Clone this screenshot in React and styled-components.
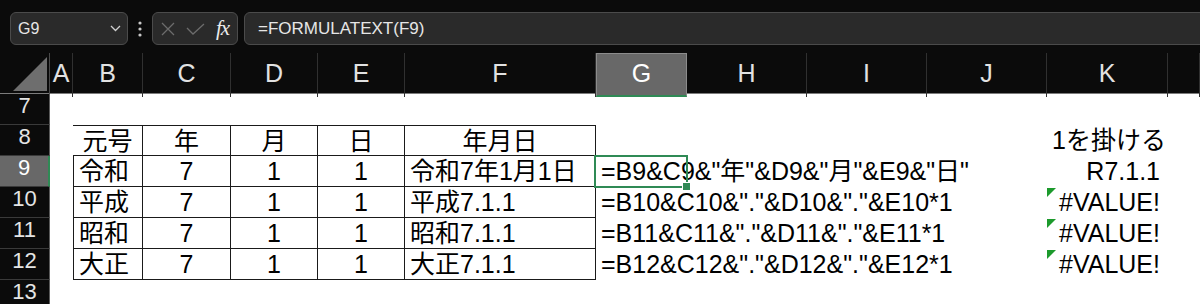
import styled, { createGlobalStyle } from "styled-components";

const GlobalStyle = createGlobalStyle`
  html, body {
    margin: 0;
    padding: 0;
    background: #0b0b0b;
  }

  * {
    box-sizing: border-box;
  }
`;

const COLUMNS = "50px 23px 70px 88px 87px 87px 191px 91px 120px 120px 120px 121px 1fr";
// L is only a sliver at the right edge, its label sits off screen
const LETTERS = ["A", "B", "C", "D", "E", "F", "G", "H", "I", "J", "K", ""];
const GREEN = "#2f8a55";

const Window = styled.div`
  width: 1200px;
  height: 304px;
  overflow: hidden;
  background: #0b0b0b;
  font-family: "Liberation Sans", "Noto Sans CJK JP", sans-serif;
`;

const TopBar = styled.div`
  display: flex;
  align-items: flex-start;
  height: 53px;
  padding: 12px 0 0 10px;
`;

const Field = styled.div`
  display: flex;
  align-items: center;
  height: 33px;
  background: #2a2a2a;
  border: 1px solid #4b4b4b;
  border-radius: 6px;
  color: #e6e6e6;
`;

const NameBox = styled(Field)`
  width: 118px;
  justify-content: space-between;
  padding: 0 6px 0 7px;
  font-size: 16px;
`;

const Grip = styled.div`
  display: flex;
  justify-content: center;
  align-items: center;
  width: 24px;
  height: 33px;
`;

const FnBox = styled(Field)`
  width: 86px;
  gap: 11px;
  padding-left: 8px;
`;

const Fx = styled.span`
  font-family: "Liberation Serif", serif;
  font-style: italic;
  font-size: 21px;
  color: #ececec;
  letter-spacing: -1px;
`;

const FormulaInput = styled(Field)`
  flex: 1;
  margin-left: 6px;
  margin-right: -8px;
  padding-left: 13px;
  font-size: 17px;
`;

const GridRow = styled.div`
  display: grid;
  grid-template-columns: ${COLUMNS};
`;

const HeaderRow = styled(GridRow)`
  height: 41px;
  background: #0b0b0b;
  border-bottom: 1px solid #7c7c7c;
`;

const Corner = styled.div`
  border-right: 1px solid #4a4a4a;
`;

const ColHead = styled.div`
  text-align: center;
  font-size: 25px;
  color: ${(p) => (p.$active ? "#ffffff" : "#e2e2e2")};
  background: ${(p) => (p.$active ? "#686868" : "transparent")};
  border-right: 1px solid ${(p) => (p.$active ? "#8c8c8c" : "#303030")};
  border-left: ${(p) => (p.$active ? "1px solid #8c8c8c" : "none")};
  border-top: ${(p) => (p.$active ? "1px solid #8c8c8c" : "none")};
  border-bottom: ${(p) => (p.$active ? `2px solid ${GREEN}` : "none")};
  line-height: ${(p) => (p.$active ? "38px" : "40px")};
`;

const BodyRow = styled(GridRow)`
  height: 31px;
  background: #ffffff;
`;

const RowHead = styled.div`
  text-align: center;
  font-size: 22px;
  line-height: 23px;
  color: ${(p) => (p.$active ? "#ffffff" : "#e4e4e4")};
  background: ${(p) => (p.$active ? "#686868" : "#0b0b0b")};
  border-right: ${(p) => (p.$active ? `2px solid ${GREEN}` : "1px solid #5a5a5a")};
  border-bottom: 1px solid #3a3a3a;
`;

const Cell = styled.div`
  position: relative;
  height: 31px;
  padding: ${(p) => (p.$align === "right" ? "0 8px 0 5px" : "0 5px")};
  font-size: 25px;
  line-height: 30px;
  color: #000;
  white-space: nowrap;
  text-align: ${(p) => p.$align || "left"};
  border-top: ${(p) => (p.$box?.includes("t") ? "1px solid #1a1a1a" : "none")};
  border-right: ${(p) => (p.$box?.includes("r") ? "1px solid #1a1a1a" : "none")};
  border-bottom: ${(p) => (p.$box?.includes("b") ? "1px solid #1a1a1a" : "none")};
  border-left: ${(p) => (p.$box?.includes("l") ? "1px solid #1a1a1a" : "none")};

  ${(p) =>
    p.$flag &&
    `
    &::before {
      content: "";
      position: absolute;
      left: 0;
      top: 1px;
      border-top: 9px solid #1c9a2c;
      border-right: 9px solid transparent;
    }
  `}

  ${(p) =>
    p.$active &&
    `
    &::after {
      content: "";
      position: absolute;
      inset: -1px -1px -1px -2px;
      border: 2px solid ${GREEN};
      z-index: 1;
    }
    &::before {
      content: "";
      position: absolute;
      right: -4px;
      bottom: -4px;
      width: 7px;
      height: 7px;
      background: ${GREEN};
      border: 1px solid #fff;
      z-index: 2;
    }
  `}
`;

const ERAS = [
  ["令和", "令和7年1月1日", '=B9&C9&"年"&D9&"月"&E9&"日"', "R7.1.1"],
  ["平成", "平成7.1.1", '=B10&C10&"."&D10&"."&E10*1', "#VALUE!"],
  ["昭和", "昭和7.1.1", '=B11&C11&"."&D11&"."&E11*1', "#VALUE!"],
  ["大正", "大正7.1.1", '=B12&C12&"."&D12&"."&E12*1', "#VALUE!"],
];

function Chevron() {
  return (
    <svg width="11" height="7" viewBox="0 0 11 7">
      <path d="M1 1 L5.5 5.5 L10 1" fill="none" stroke="#cfcfcf" strokeWidth="1.3" />
    </svg>
  );
}

function Dots() {
  return (
    <svg width="4" height="16" viewBox="0 0 4 16">
      <circle cx="2" cy="2" r="1.6" fill="#c8c8c8" />
      <circle cx="2" cy="8" r="1.6" fill="#c8c8c8" />
      <circle cx="2" cy="14" r="1.6" fill="#c8c8c8" />
    </svg>
  );
}

function CancelIcon() {
  return (
    <svg width="14" height="14" viewBox="0 0 14 14">
      <path d="M1 1 L13 13 M13 1 L1 13" stroke="#6c6c6c" strokeWidth="1.3" />
    </svg>
  );
}

function EnterIcon() {
  return (
    <svg width="19" height="12" viewBox="0 0 19 12">
      <path d="M1 5 L7 11 L18 1" fill="none" stroke="#6c6c6c" strokeWidth="1.3" />
    </svg>
  );
}

function SelectAll() {
  return (
    <Corner>
      <svg width="49" height="40" viewBox="0 0 49 40">
        <polygon points="47,4 47,38 13,38" fill="#6e6e6e" />
      </svg>
    </Corner>
  );
}

function Row({ n, active, children }) {
  return (
    <BodyRow>
      <RowHead $active={active}>{n}</RowHead>
      {children}
    </BodyRow>
  );
}

export default function App() {
  return (
    <Window>
      <GlobalStyle />
      <TopBar>
        <NameBox>
          <span>G9</span>
          <Chevron />
        </NameBox>
        <Grip>
          <Dots />
        </Grip>
        <FnBox>
          <CancelIcon />
          <EnterIcon />
          <Fx>fx</Fx>
        </FnBox>
        <FormulaInput>=FORMULATEXT(F9)</FormulaInput>
      </TopBar>

      <HeaderRow>
        <SelectAll />
        {LETTERS.map((l, i) => (
          <ColHead key={i} $active={l === "G"}>
            {l}
          </ColHead>
        ))}
      </HeaderRow>

      <Row n={7} />
      <Row n={8}>
        <Cell />
        <Cell $align="center" $box="trb">元号</Cell>
        <Cell $align="center" $box="trb">年</Cell>
        <Cell $align="center" $box="trb">月</Cell>
        <Cell $align="center" $box="trb">日</Cell>
        <Cell $align="center" $box="trb">年月日</Cell>
        <Cell />
        <Cell />
        <Cell />
        <Cell />
        <Cell $align="right">1を掛ける</Cell>
      </Row>
      {ERAS.map(([era, date, formula, value], i) => (
        <Row key={era} n={9 + i} active={i === 0}>
          <Cell />
          <Cell $box="lrb">{era}</Cell>
          <Cell $align="center" $box="rb">7</Cell>
          <Cell $align="center" $box="rb">1</Cell>
          <Cell $align="center" $box="rb">1</Cell>
          <Cell $box="rb">{date}</Cell>
          <Cell $active={i === 0}>{formula}</Cell>
          <Cell />
          <Cell />
          <Cell />
          <Cell $align="right" $flag={i > 0}>
            {value}
          </Cell>
        </Row>
      ))}
      <Row n={13} />
    </Window>
  );
}
